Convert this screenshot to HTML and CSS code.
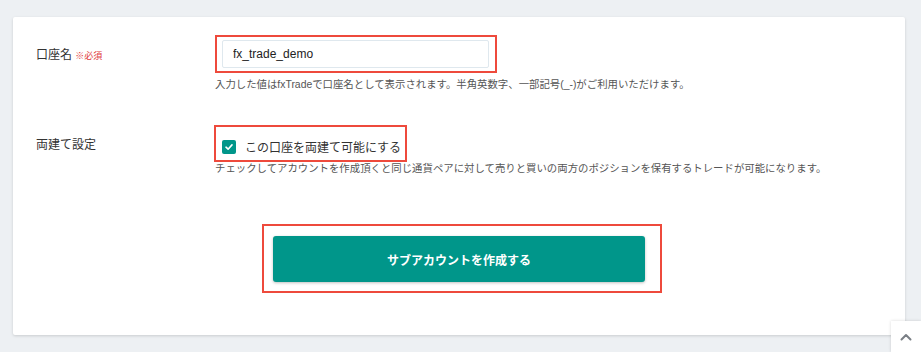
FILE: index.html
```html
<!DOCTYPE html>
<html lang="ja">
<head>
  <meta charset="UTF-8" />
  <meta name="viewport" content="width=device-width, initial-scale=1.0" />
  <title>サブアカウント作成</title>
  <link rel="stylesheet" href="styles.css">
</head>
<body>
  <div class="card">
    <div class="form-row">
      <div class="form-label">口座名 <span class="required">※必須</span></div>
      <div class="form-field">
        <div class="mark mark-input">
          <input class="text-input" type="text" value="fx_trade_demo">
        </div>
        <p class="help">入力した値はfxTradeで口座名として表示されます。半角英数字、一部記号(_-)がご利用いただけます。</p>
      </div>
    </div>
    <div class="form-row row-hedge">
      <div class="form-label">両建て設定</div>
      <div class="form-field">
        <div class="mark mark-check">
          <label class="check">
            <span class="check-box">
              <svg width="10" height="10" viewBox="0 0 10 10"><path d="M2 5.2 L4.1 7.2 L8 2.9" fill="none" stroke="#fff" stroke-width="1.6" stroke-linecap="round" stroke-linejoin="round"/></svg>
            </span>
            この口座を両建て可能にする
          </label>
        </div>
        <p class="help help-hedge">チェックしてアカウントを作成頂くと同じ通貨ペアに対して売りと買いの両方のポジションを保有するトレードが可能になります。</p>
      </div>
    </div>
    <div class="actions">
      <div class="mark mark-button">
        <button class="submit-button">サブアカウントを作成する</button>
      </div>
    </div>
  </div>

  <a class="page-top" href="#">
    <svg width="12" height="8" viewBox="0 0 12 8"><path d="M1.5 6.5 L6 2 L10.5 6.5" fill="none" stroke="#7a7f85" stroke-width="2" stroke-linecap="round" stroke-linejoin="round"/></svg>
  </a>
</body>
</html>
```

FILE: styles.css
```css
body {
  margin: 0;
  padding: 17px 0 0 13px;
  background-color: #edf0f3;
  font-family: "Liberation Sans", "Noto Sans CJK JP", sans-serif;
  color: #333;
  height: 352px;
  box-sizing: border-box;
  overflow: hidden;
}
.card {
  width: 892px;
  box-sizing: border-box;
  background-color: white;
  padding: 18px 0 42px 23px;
  box-shadow: 0 1px 3px rgba(0,0,0,0.15);
  border-radius: 2px;
}
.form-row {
  display: flex;
}
.row-hedge {
  margin-top: 32px;
}
.form-label {
  width: 179px;
  flex-shrink: 0;
  font-size: 12px;
  line-height: 38px;
  padding-top: 1px;
}
.required {
  color: #e03a3a;
  font-size: 9px;
}
.form-field {
  flex: 1;
}
.mark {
  display: inline-block;
  border: 2px solid #ee4a3c;
  box-sizing: border-box;
}
.mark-input {
  width: 282px;
  height: 38px;
  padding: 3px 6px 3px 5px;
}
.text-input {
  width: 100%;
  height: 28px;
  box-sizing: border-box;
  border: 1px solid #dfe8ee;
  border-radius: 2px;
  padding: 0 10px;
  font-family: "Liberation Sans", "Noto Sans CJK JP", sans-serif;
  font-size: 12px;
  color: #222;
  outline: none;
}
.help {
  margin: 4px 0 0;
  font-size: 10.4px;
  line-height: 16px;
  color: #555;
}
.help-hedge {
  margin-top: 0;
  line-height: 14px;
}
.mark-check {
  height: 37px;
  padding: 3px 4px 0 6px;
  margin-left: -1px;
}
.check {
  display: flex;
  align-items: center;
  height: 33px;
  font-size: 12px;
  color: #333;
}
.check-box {
  width: 14px;
  height: 14px;
  border-radius: 2px;
  background-color: #00968a;
  display: flex;
  align-items: center;
  justify-content: center;
  margin-right: 9px;
}
.actions {
  display: flex;
  justify-content: center;
  margin-top: 48px;
  margin-right: 23px;
}
.mark-button {
  padding: 10px 15px 9px 9px;
  margin-left: 6px;
}
.submit-button {
  display: block;
  width: 372px;
  height: 46px;
  background-color: #00968a;
  color: white;
  border: none;
  border-radius: 3px;
  font-family: "Liberation Sans", "Noto Sans CJK JP", sans-serif;
  font-size: 12px;
  font-weight: bold;
  box-shadow: 0 1px 3px rgba(0,0,0,0.25);
  cursor: pointer;
}
.page-top {
  position: fixed;
  right: 0;
  bottom: 0;
  width: 30px;
  height: 31px;
  background-color: white;
  box-shadow: 0 0 3px rgba(0,0,0,0.15);
  display: flex;
  align-items: center;
  justify-content: center;
}
```
